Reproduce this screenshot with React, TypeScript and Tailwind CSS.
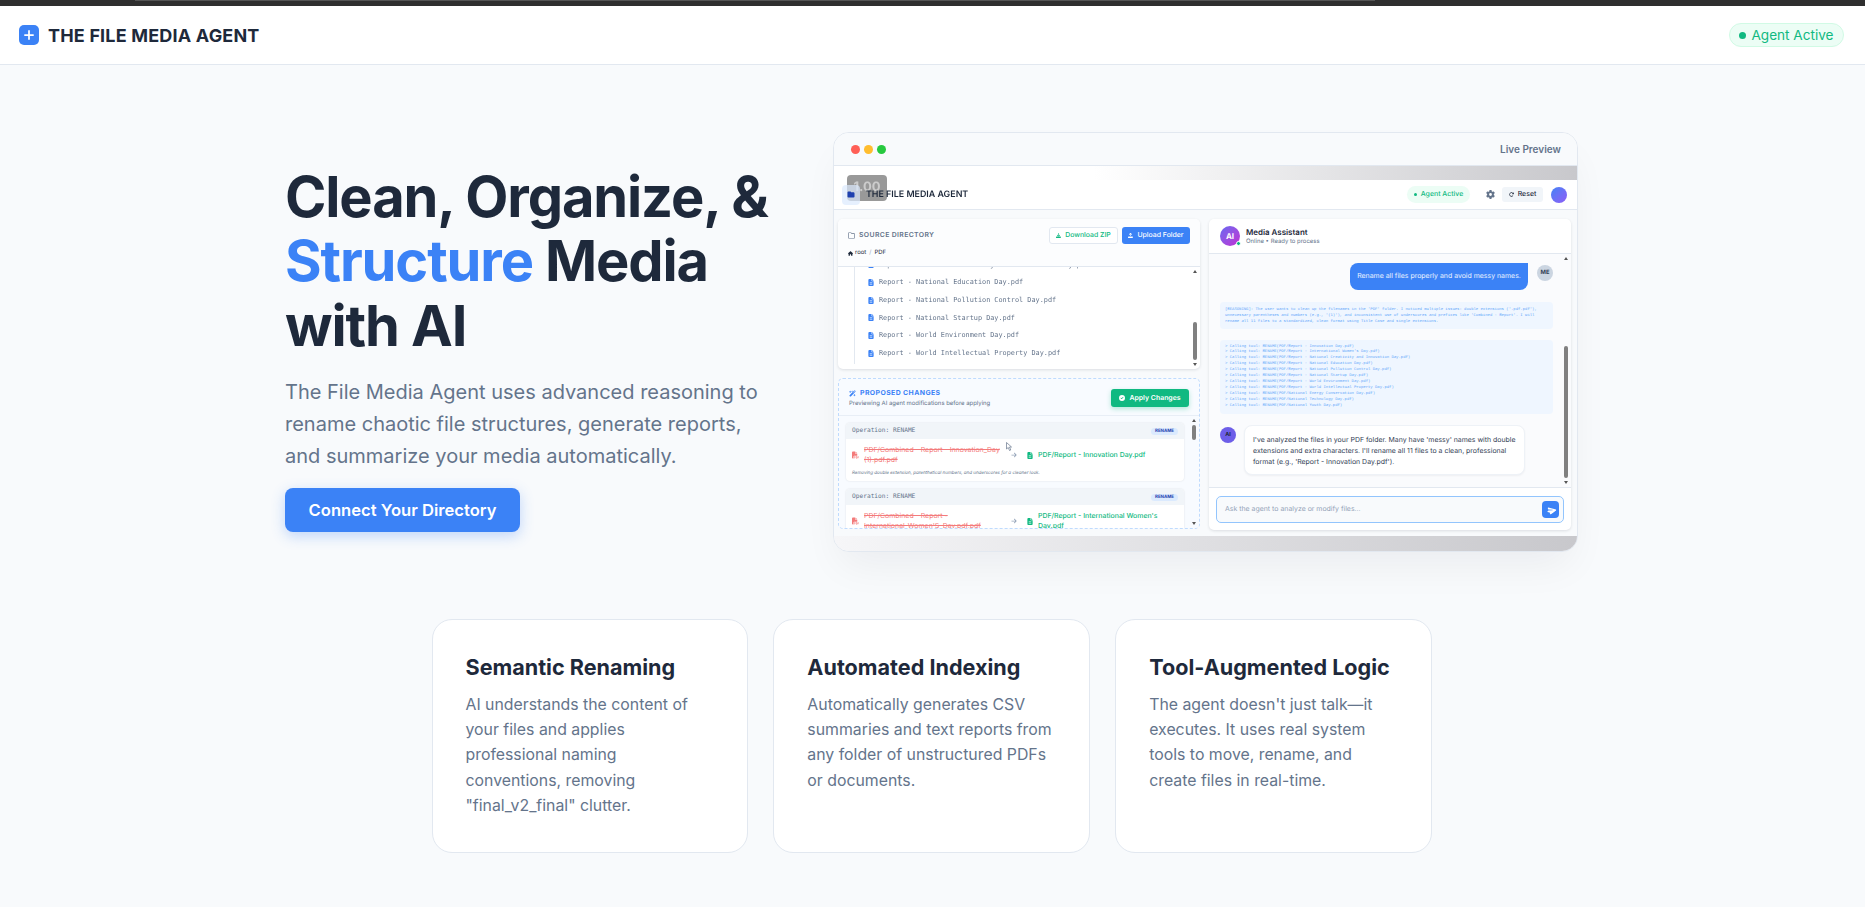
import {
  FaArrowRight,
  FaCircleCheck,
  FaDownload,
  FaFileLines,
  FaFilePdf,
  FaFolder,
  FaGear,
  FaHouse,
  FaPaperPlane,
  FaRegFolder,
  FaRotateRight,
  FaUpload,
  FaWandMagicSparkles,
} from "react-icons/fa6";
import { Plus } from "lucide-react";

const FILES = [
  "Report - National Creativity and Innovation Day.pdf",
  "Report - National Education Day.pdf",
  "Report - National Pollution Control Day.pdf",
  "Report - National Startup Day.pdf",
  "Report - World Environment Day.pdf",
  "Report - World Intellectual Property Day.pdf",
];

const REASONING = [
  "[REASONING]: The user wants to clean up the filenames in the 'PDF' folder. I noticed multiple issues: double extensions ('.pdf.pdf'),",
  "unnecessary parentheses and numbers (e.g., '(1)'), and inconsistent use of underscores and prefixes like 'Combined - Report'. I will",
  "rename all 11 files to a standardized, clean format using Title Case and single extensions.",
];

const TOOL_CALLS = [
  "PDF/Report - Innovation Day.pdf",
  "PDF/Report - International Women's Day.pdf",
  "PDF/Report - National Creativity and Innovation Day.pdf",
  "PDF/Report - National Education Day.pdf",
  "PDF/Report - National Pollution Control Day.pdf",
  "PDF/Report - National Startup Day.pdf",
  "PDF/Report - World Environment Day.pdf",
  "PDF/Report - World Intellectual Property Day.pdf",
  "PDF/National Energy Conservation Day.pdf",
  "PDF/National Technology Day.pdf",
  "PDF/National Youth Day.pdf",
];

const FEATURES = [
  {
    title: "Semantic Renaming",
    desc: 'AI understands the content of your files and applies professional naming conventions, removing "final_v2_final" clutter.',
  },
  {
    title: "Automated Indexing",
    desc: "Automatically generates CSV summaries and text reports from any folder of unstructured PDFs or documents.",
  },
  {
    title: "Tool-Augmented Logic",
    desc: "The agent doesn't just talk—it executes. It uses real system tools to move, rename, and create files in real-time.",
  },
];

// little fake scrollbar used by the panes of the preview
function FakeScrollbar({ thumbClass }: { thumbClass: string }) {
  return (
    <div className="absolute top-0 bottom-0 right-[2px] w-[5px]">
      <div className="absolute top-[3px] left-0 w-0 h-0 border-x-[2px] border-b-[3px] border-x-transparent border-b-[#555]" />
      <div className={`absolute left-0 w-[4px] rounded-full bg-[#808080] ${thumbClass}`} />
      <div className="absolute bottom-[3px] left-0 w-0 h-0 border-x-[2px] border-t-[3px] border-x-transparent border-t-[#555]" />
    </div>
  );
}

function ChangeCard({ from, to, note }: { from: string; to: string; note?: string }) {
  return (
    <div className="rounded-[4px] bg-white shadow-[0_0_2px_rgba(15,23,42,0.12)] overflow-hidden shrink-0">
      <div className="h-[16px] flex items-center justify-between pl-[6px] pr-[6px] bg-[#f1f5f9]">
        <span className="font-['DejaVu_Sans_Mono',monospace] text-[6.2px] text-[#64748b]">Operation: RENAME</span>
        <span className="h-[7px] px-[4px] rounded-full bg-[#dbeafe] text-[#1e40af] text-[4.4px] font-bold leading-[7px]">RENAME</span>
      </div>
      <div className="flex items-center pl-[6px] pt-[6px]">
        <FaFilePdf className="w-[7px] h-[8px] text-[#ef4444] opacity-70 shrink-0" />
        <span className="w-[140px] ml-[5px] text-[6.95px] leading-[10px] text-[#ef4444] line-through opacity-70 shrink-0">{from}</span>
        <FaArrowRight className="w-[8px] h-[6px] ml-[6px] text-[#94a3b8] shrink-0" />
        <FaFileLines className="w-[6px] h-[7px] ml-[9px] text-[#10b981] shrink-0" />
        <span className="w-[125px] ml-[5px] text-[6.95px] leading-[10px] text-[#10b981] font-medium">{to}</span>
      </div>
      {note && <p className="pl-[6px] pt-[5px] pb-[3px] text-[4.5px] leading-[8px] italic text-[#64748b]">{note}</p>}
    </div>
  );
}

function LivePreview() {
  return (
    <div className="relative w-[745px] h-[420px] rounded-[16px] border border-[#e2e8f0] bg-white shadow-[0_20px_40px_-8px_rgba(15,23,42,0.06)] overflow-hidden shrink-0">
      <div className="h-[33px] flex items-center justify-between pl-[17px] pr-[16px] bg-[#f8fafc] border-b border-[#e2e8f0]">
        <div className="flex gap-[4px]">
          <span className="w-[9px] h-[9px] rounded-full bg-[#ff5f56]" />
          <span className="w-[9px] h-[9px] rounded-full bg-[#ffbd2e]" />
          <span className="w-[9px] h-[9px] rounded-full bg-[#27c93f]" />
        </div>
        <span className="text-[10px] font-semibold text-[#64748b]">Live Preview</span>
      </div>

      <div className="blur-[0.3px] [text-rendering:geometricPrecision]">
        <div className="h-[14px] bg-gradient-to-r from-white from-35% to-[#c8c8cc]" />

        <div className="relative h-[30px] flex items-center pl-[8px] pr-[10px] bg-white border-b border-[#e2e8f0]">
          {/* zoom badge left over the page by the recording tool */}
          <div className="absolute left-[13px] top-[-5px] w-[40px] h-[26px] rounded-[4px] bg-[#808080]/80 flex items-center justify-center text-[13px] font-bold text-white/50">1.00</div>
          <div className="relative w-[18px] h-[20px] rounded-[4px] bg-[#dbeafe]/70 flex items-center justify-center">
            <FaFolder className="w-[8px] h-[7px] text-[#1e40af]" />
          </div>
          <span className="relative ml-[6px] text-[8.9px] font-semibold text-[#1e293b]">THE FILE MEDIA AGENT</span>
          <div className="ml-auto h-[17px] w-[63px] flex items-center justify-center gap-[4px] rounded-full bg-[#ecfdf5] text-[#10b981] text-[6.95px] font-medium">
            <span className="w-[3px] h-[3px] rounded-full bg-[#10b981]" />
            Agent Active
          </div>
          <FaGear className="w-[9px] h-[9px] ml-[16px] text-[#64748b]" />
          <div className="ml-[7px] h-[15px] w-[41px] flex items-center justify-center gap-[4px] rounded-[3px] bg-[#f1f5f9] text-[6.95px] font-medium text-[#1e293b]">
            <FaRotateRight className="w-[5px] h-[5px]" />
            Reset
          </div>
          <span className="ml-[8px] w-[16px] h-[16px] rounded-full bg-gradient-to-br from-[#3b82f6] to-[#8b5cf6]" />
        </div>

        <div className="h-[326px] flex gap-[9px] pl-[4px] pr-[6px] pt-[9px] bg-[#f8fafc]">
          <div className="w-[362px] flex flex-col gap-[9px] shrink-0">
            {/* source directory */}
            <div className="h-[150px] rounded-[5px] bg-white shadow-[0_1px_3px_rgba(15,23,42,0.12)] flex flex-col overflow-hidden">
              <div className="h-[48px] pl-[10px] pr-[10px] bg-[#fcfdfe] border-b border-[#e2e8f0] shrink-0">
                <div className="flex items-center pt-[8px]">
                  <FaRegFolder className="w-[7px] h-[7px] text-[#64748b]" />
                  <span className="ml-[4px] text-[6.9px] font-semibold tracking-[0.05em] text-[#64748b]">SOURCE DIRECTORY</span>
                  <div className="ml-auto h-[17px] w-[69px] flex items-center justify-center gap-[4px] rounded-[3px] border border-[#e2e8f0] bg-white text-[#10b981] text-[6.9px] font-medium">
                    <FaDownload className="w-[5px] h-[5px]" />
                    Download ZIP
                  </div>
                  <div className="ml-[4px] h-[17px] w-[68px] flex items-center justify-center gap-[4px] rounded-[3px] bg-[#3b82f6] text-white text-[6.9px] font-medium">
                    <FaUpload className="w-[5px] h-[5px]" />
                    Upload Folder
                  </div>
                </div>
                <div className="flex items-center gap-[2px] pt-[5px] text-[5.96px] text-[#1e293b]">
                  <FaHouse className="w-[5px] h-[5px]" />
                  <span>root</span>
                  <span className="text-[#94a3b8] px-[1px]">/</span>
                  <span>PDF</span>
                </div>
              </div>
              <div className="relative flex-1 overflow-hidden">
                <div className="ml-[16px] mr-[8px] pl-[13px] h-[97px] border-l border-[#e2e8f0] flex flex-col overflow-hidden">
                  {FILES.map((f, i) => (
                    <div key={f} className={`h-[17.67px] flex items-center gap-[5px] shrink-0 ${i === 0 ? "mt-[-11px]" : ""}`}>
                      <FaFileLines className="w-[6px] h-[7px] text-[#3b82f6] shrink-0" />
                      <span className="font-['DejaVu_Sans_Mono',monospace] text-[6.85px] text-[#64748b] whitespace-nowrap">{f}</span>
                    </div>
                  ))}
                </div>
                <FakeScrollbar thumbClass="top-[55px] h-[38px]" />
              </div>
            </div>

            {/* proposed changes */}
            <div className="h-[151px] rounded-[5px] border border-dashed border-[#bfdbfe] bg-[#f8fbff] flex flex-col overflow-hidden">
              <div className="h-[37px] pl-[10px] pr-[10px] border-b border-[#e8eef6] flex items-start justify-between shrink-0">
                <div className="pt-[9px]">
                  <div className="flex items-center gap-[4px]">
                    <FaWandMagicSparkles className="w-[7px] h-[7px] text-[#3b82f6]" />
                    <span className="text-[6.9px] font-bold tracking-[0.06em] text-[#3b82f6]">PROPOSED CHANGES</span>
                  </div>
                  <p className="pt-[2px] text-[5.96px] text-[#64748b]">Previewing AI agent modifications before applying</p>
                </div>
                <div className="mt-[10px] h-[18px] w-[78px] flex items-center justify-center gap-[4px] rounded-[3px] bg-[#10b981] text-white text-[6.95px] font-semibold shadow-[0_2px_5px_rgba(16,185,129,0.3)]">
                  <FaCircleCheck className="w-[6px] h-[6px]" />
                  Apply Changes
                </div>
              </div>
              <div className="relative flex-1 overflow-hidden pl-[7px] pr-[15px] pt-[7px] flex flex-col gap-[8px]">
                <ChangeCard
                  from="PDF/Combined - Report - Innovation_Day (1).pdf.pdf"
                  to="PDF/Report - Innovation Day.pdf"
                  note="Removing double extension, parenthetical numbers, and underscores for a cleaner look."
                />
                <ChangeCard
                  from="PDF/Combined - Report - International_Women'S_Day.pdf.pdf"
                  to="PDF/Report - International Women's Day.pdf"
                />
                <FakeScrollbar thumbClass="top-[9px] h-[15px]" />
                {/* mouse pointer */}
                <svg className="absolute left-[167px] top-[26px] w-[6px] h-[9px]" viewBox="0 0 12 18">
                  <path d="M1 1v13l3.5-3 2.5 6 2.5-1-2.5-6H11z" fill="#fff" stroke="#64748b" strokeWidth="1.4" />
                </svg>
              </div>
            </div>
          </div>

          {/* chat */}
          <div className="w-[362px] h-[311px] rounded-[5px] bg-white shadow-[0_1px_3px_rgba(15,23,42,0.12)] flex flex-col overflow-hidden shrink-0">
            <div className="h-[35px] flex items-center pl-[11px] border-b border-[#e2e8f0] shrink-0">
              <div className="relative w-[20px] h-[20px] rounded-full bg-gradient-to-br from-[#6366f1] to-[#c026d3] flex items-center justify-center text-[8px] font-bold text-white">
                AI
                <span className="absolute right-[-1px] bottom-0 w-[5px] h-[5px] rounded-full bg-[#10b981] border border-white" />
              </div>
              <div className="ml-[6px] mt-[2px]">
                <p className="text-[7.94px] leading-[10px] font-semibold text-[#1e293b]">Media Assistant</p>
                <p className="text-[5.96px] leading-[10px] text-[#64748b]">Online • Ready to process</p>
              </div>
            </div>

            <div className="relative h-[233px] bg-[#fafbfd] overflow-hidden pl-[11px] pr-[18px] pt-[9px] shrink-0">
              <div className="flex justify-end items-start gap-[9px]">
                <div className="w-[178px] h-[27px] flex items-center justify-center rounded-[8px] rounded-tr-none bg-[#3b82f6] text-white/90 text-[6.95px] whitespace-nowrap">
                  Rename all files properly and avoid messy names.
                </div>
                <span className="mt-[2px] w-[16px] h-[16px] rounded-full bg-[#cbd5e1] flex items-center justify-center text-[5.8px] font-bold text-[#334155]">ME</span>
              </div>
              <div className="mt-[12px] h-[27px] rounded-[4px] bg-[#eff6ff] flex flex-col justify-center pl-[5px] font-['Liberation_Mono',monospace] text-[3.92px] leading-[6px] text-[#60a5fa]">
                {REASONING.map((l) => (
                  <div key={l} className="whitespace-nowrap">{l}</div>
                ))}
              </div>
              <div className="mt-[11px] h-[74px] rounded-[4px] bg-[#eff6ff] flex flex-col justify-center pl-[5px] font-['Liberation_Mono',monospace] text-[3.92px] leading-[5.9px] text-[#60a5fa]">
                {TOOL_CALLS.map((l) => (
                  <div key={l} className="whitespace-nowrap">{"> Calling tool: RENAME(" + l + ")"}</div>
                ))}
              </div>
              <div className="mt-[11px] flex items-start gap-[8px]">
                <span className="mt-[2px] w-[16px] h-[16px] rounded-full bg-[#6d5ee8] flex items-center justify-center text-[5.5px] font-bold text-[#1e293b] shrink-0">AI</span>
                <div className="w-[281px] h-[50px] rounded-[8px] border border-[#eef2f7] bg-white pl-[8px] pt-[8px] text-[6.95px] leading-[11px] text-[#334155] shadow-[0_1px_2px_rgba(15,23,42,0.05)]">
                  I've analyzed the files in your PDF folder. Many have 'messy' names with double extensions and extra characters. I'll rename all 11 files to a clean, professional format (e.g., 'Report - Innovation Day.pdf').
                </div>
              </div>
              <FakeScrollbar thumbClass="top-[92px] h-[132px]" />
            </div>

            <div className="flex-1 border-t border-[#e2e8f0] pl-[7px] pr-[7px] pt-[8px]">
              <div className="h-[27px] rounded-[5px] border border-[#93c5fd] bg-[#f8fafc] flex items-center pl-[8px] pr-[4px]">
                <span className="text-[6.95px] text-[#94a3b8]">Ask the agent to analyze or modify files...</span>
                <span className="ml-auto w-[17px] h-[17px] rounded-[4px] bg-[#3b82f6] flex items-center justify-center">
                  <FaPaperPlane className="w-[8px] h-[8px] text-white rotate-45" />
                </span>
              </div>
            </div>
          </div>
        </div>

        <div className="h-[16px] bg-gradient-to-r from-[#f6f6f8] to-[#c8c8cc]" />
      </div>
    </div>
  );
}

export default function App() {
  return (
    <div className="min-h-screen bg-[#f8fafc] font-['Inter',sans-serif] text-[#1e293b]">
      <div className="h-[6px] bg-[#2f2f2f]">
        <div className="h-px ml-[135px] mr-[490px] bg-[#555]" />
      </div>

      <header className="h-[59px] flex items-center justify-between pl-[19px] pr-[21px] bg-white border-b border-[#e2e8f0]">
        <div className="flex items-center gap-[9px]">
          <span className="w-[20px] h-[20px] rounded-[5px] bg-[#3b82f6] flex items-center justify-center">
            <Plus className="w-[14px] h-[14px] text-white" strokeWidth={3} />
          </span>
          <span className="text-[18px] font-bold tracking-[0.01em] text-[#1e293b]">THE FILE MEDIA AGENT</span>
        </div>
        <div className="h-[24px] w-[115px] flex items-center justify-center gap-[5px] rounded-full border border-[#d1fae5] bg-[#ecfdf5] text-[13.6px] text-[#10b981]">
          <span className="w-[7px] h-[7px] rounded-full bg-[#10b981]" />
          Agent Active
        </div>
      </header>

      <main className="w-[1295px] mx-auto pt-[67px]">
        <section className="flex items-start gap-[60px]">
          <div className="w-[488px] pt-[33px]">
            <h1 className="text-[56px] leading-[64.4px] font-bold tracking-[-0.02em] text-[#1e293b]">
              Clean, Organize, &amp; <span className="text-[#3b82f6]">Structure</span> Media with AI
            </h1>
            <p className="mt-[18px] text-[20px] leading-[32px] text-[#64748b]">
              The File Media Agent uses advanced reasoning to rename chaotic file structures, generate reports, and summarize your media automatically.
            </p>
            <button className="mt-[16px] w-[235px] h-[44px] rounded-[8px] bg-[#3b82f6] text-white text-[16.6px] font-semibold shadow-[0_4px_14px_rgba(59,130,246,0.3)]">
              Connect Your Directory
            </button>
          </div>
          <LivePreview />
        </section>

        <section className="mt-[67px] ml-[146.5px] w-[1000px] grid grid-cols-3 gap-[25.6px]">
          {FEATURES.map((f) => (
            <div key={f.title} className="h-[234px] rounded-[20px] border border-[#e2e8f0] bg-white pl-[33px] pr-[33px] pt-[31px]">
              <h3 className="text-[21.6px] leading-[32px] font-bold text-[#1e293b]">{f.title}</h3>
              <p className="mt-[9px] text-[15.84px] leading-[25.2px] text-[#64748b]">{f.desc}</p>
            </div>
          ))}
        </section>
      </main>
    </div>
  );
}
